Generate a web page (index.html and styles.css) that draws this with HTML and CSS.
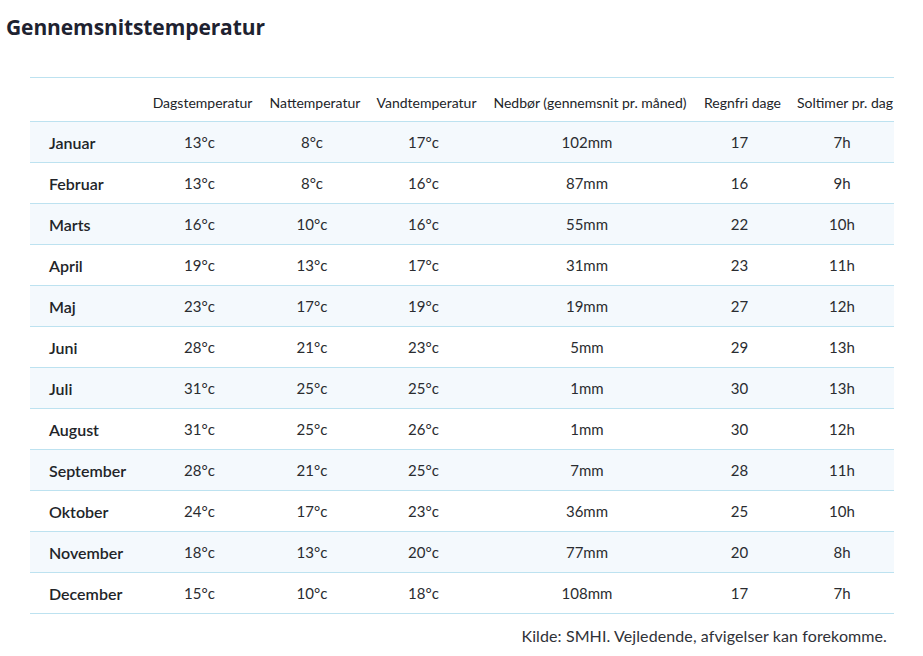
FILE: index.html
```html
<!DOCTYPE html>
<html lang="da">
<head>
<meta charset="utf-8">
<title>Gennemsnitstemperatur</title>
<link rel="stylesheet" href="styles.css">
</head>
<body>
<h2 class="title">Gennemsnitstemperatur</h2>
<div class="table-wrap">
<table class="climate">
<colgroup>
<col class="c-month"><col class="c-day"><col class="c-night"><col class="c-water"><col class="c-rain"><col class="c-dry"><col class="c-sun">
</colgroup>
<thead>
<tr><th></th><th>Dagstemperatur</th><th>Nattemperatur</th><th>Vandtemperatur</th><th>Nedbør (gennemsnit pr. måned)</th><th>Regnfri dage</th><th>Soltimer pr. dag</th></tr>
</thead>
<tbody>
<tr><td>Januar</td><td>13°c</td><td>8°c</td><td>17°c</td><td>102mm</td><td>17</td><td>7h</td></tr>
<tr><td>Februar</td><td>13°c</td><td>8°c</td><td>16°c</td><td>87mm</td><td>16</td><td>9h</td></tr>
<tr><td>Marts</td><td>16°c</td><td>10°c</td><td>16°c</td><td>55mm</td><td>22</td><td>10h</td></tr>
<tr><td>April</td><td>19°c</td><td>13°c</td><td>17°c</td><td>31mm</td><td>23</td><td>11h</td></tr>
<tr><td>Maj</td><td>23°c</td><td>17°c</td><td>19°c</td><td>19mm</td><td>27</td><td>12h</td></tr>
<tr><td>Juni</td><td>28°c</td><td>21°c</td><td>23°c</td><td>5mm</td><td>29</td><td>13h</td></tr>
<tr><td>Juli</td><td>31°c</td><td>25°c</td><td>25°c</td><td>1mm</td><td>30</td><td>13h</td></tr>
<tr><td>August</td><td>31°c</td><td>25°c</td><td>26°c</td><td>1mm</td><td>30</td><td>12h</td></tr>
<tr><td>September</td><td>28°c</td><td>21°c</td><td>25°c</td><td>7mm</td><td>28</td><td>11h</td></tr>
<tr><td>Oktober</td><td>24°c</td><td>17°c</td><td>23°c</td><td>36mm</td><td>25</td><td>10h</td></tr>
<tr><td>November</td><td>18°c</td><td>13°c</td><td>20°c</td><td>77mm</td><td>20</td><td>8h</td></tr>
<tr><td>December</td><td>15°c</td><td>10°c</td><td>18°c</td><td>108mm</td><td>17</td><td>7h</td></tr>
</tbody>
</table>
</div>
<p class="source">Kilde: SMHI. Vejledende, afvigelser kan forekomme.</p>
</body>
</html>
```
FILE: styles.css
```css
html, body {
  margin: 0;
  padding: 0;
  background: #ffffff;
}
body {
  font-family: Lato, "Open Sans", sans-serif;
  color: #222428;
}
.title {
  margin: 14px 0 0 6px;
  font-family: "Open Sans", sans-serif;
  font-size: 21px;
  font-weight: 700;
  line-height: 26px;
  color: #1e2230;
  letter-spacing: -0.1px;
}
.table-wrap {
  margin: 37px 0 0 30px;
  width: 864px;
  overflow: hidden;
}
.climate {
  border-collapse: collapse;
  table-layout: fixed;
  width: 870px;
}
.c-month { width: 113px; }
.c-day { width: 119px; }
.c-night { width: 106px; }
.c-water { width: 117px; }
.c-rain { width: 210px; }
.c-dry { width: 95px; }
.c-sun { width: 110px; }
.climate th {
  height: 44px;
  padding: 5px 0 0 0;
  box-sizing: border-box;
  font-size: 14px;
  font-weight: 400;
  text-align: center;
  white-space: nowrap;
  vertical-align: middle;
  color: #222428;
  border-top: 1px solid #bde2f0;
  border-bottom: 1px solid #bde2f0;
}
.climate td {
  height: 40px;
  padding: 0 6px 0 0;
  font-size: 15px;
  text-align: center;
  white-space: nowrap;
  vertical-align: middle;
  border-bottom: 1px solid #bde2f0;
  color: #2a2c30;
}
.climate td:first-child {
  text-align: left;
  padding-left: 19px;
  padding-right: 0;
  font-size: 16px;
  font-weight: 600;
  color: #222428;
}
.climate tbody tr:nth-child(odd) {
  background: #f4f9fd;
}
.source {
  margin: 12px 36px 0 0;
  text-align: right;
  font-size: 16px;
  letter-spacing: 0.1px;
  color: #303238;
}
```
